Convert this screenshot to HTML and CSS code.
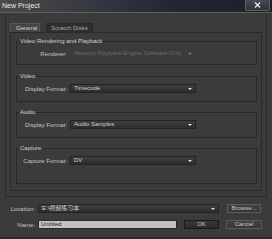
FILE: index.html
```html
<!DOCTYPE html>
<html>
<head>
<meta charset="utf-8">
<link rel="stylesheet" href="styles.css">
</head>
<body>
<div class="window">
  <div class="titlebar">
    <span class="title">New Project</span>
    <span class="close"><svg width="7" height="6" viewBox="0 0 7 6"><path d="M1 0.5 L6 5.5 M6 0.5 L1 5.5" stroke="#e6e6e6" stroke-width="1.4"/></svg></span>
  </div>
  <div class="frame">
    <div class="tabs">
      <span class="tab active">General</span>
      <span class="tab">Scratch Disks</span>
    </div>
    <div class="panel">
      <fieldset class="group g1">
        <legend>Video Rendering and Playback</legend>
        <div class="row"><span class="label">Renderer:</span><span class="select disabled"><span class="val">Mercury Playback Engine Software Only</span><span class="arrow"></span></span></div>
      </fieldset>
      <fieldset class="group g2">
        <legend>Video</legend>
        <div class="row"><span class="label">Display Format:</span><span class="select"><span class="val">Timecode</span><span class="arrow"></span></span></div>
      </fieldset>
      <fieldset class="group g3">
        <legend>Audio</legend>
        <div class="row"><span class="label">Display Format:</span><span class="select"><span class="val">Audio Samples</span><span class="arrow"></span></span></div>
      </fieldset>
      <fieldset class="group g4">
        <legend>Capture</legend>
        <div class="row"><span class="label">Capture Format:</span><span class="select"><span class="val">DV</span><span class="arrow"></span></span></div>
      </fieldset>
    </div>
  </div>
  <div class="bottom">
    <div class="brow">
      <span class="blabel">Location:</span>
      <span class="select loc"><span class="val">E:\视频练习本</span><span class="arrow"></span></span>
      <span class="btn browse">Browse...</span>
    </div>
    <div class="brow">
      <span class="blabel">Name:</span>
      <span class="input">Untitled</span>
      <span class="btn ok">OK</span>
      <span class="btn cancel">Cancel</span>
    </div>
  </div>
</div>
</body>
</html>
```

FILE: styles.css
```css
html, body {
  margin: 0;
  padding: 0;
  background: #3b3b3b;
}
body {
  width: 272px;
  height: 239px;
  overflow: hidden;
  font-family: "Liberation Sans", "Noto Sans CJK SC", sans-serif;
  font-size: 6px;
  color: #c4c4c4;
}
.window {
  width: 272px;
  height: 239px;
  box-sizing: border-box;
  display: flex;
  flex-direction: column;
  background: #3b3b3b;
  border-bottom: 2px solid #2a2a2a;
}
.titlebar {
  height: 12px;
  border-bottom: 1px solid #5e5e5e;
  display: flex;
  justify-content: space-between;
  align-items: flex-start;
  background: linear-gradient(90deg, #4a4a4a 0%, #353840 35%, #22262e 65%, #1c2029 100%);
}
.title {
  font-size: 7px;
  line-height: 11px;
  padding-left: 2px;
  color: #e8e8e8;
}
.close {
  width: 25px;
  height: 11px;
  margin-right: 2px;
  box-sizing: border-box;
  border: 1px solid #5a5e66;
  border-top: none;
  border-radius: 0 0 2px 2px;
  background: linear-gradient(#474b53, #2e323a);
  display: flex;
  align-items: center;
  justify-content: center;
}
.frame {
  margin: 0 5px 0 5px;
  border: 1px solid #2c2c2c;
  border-top: none;
  padding: 10px 4px 5px 4px;
}
.tabs {
  display: flex;
  gap: 6px;
  height: 9px;
}
.tab {
  box-sizing: border-box;
  height: 9px;
  line-height: 8px;
  padding: 0 4px;
  border: 1px solid #2a2a2a;
  border-bottom: none;
  background: #2f2f2f;
  color: #a8a8a8;
}
.tab.active {
  width: 30px;
  padding-left: 5px;
  background: #444444;
  border-color: #555555;
  color: #d4d4d4;
}
.panel {
  border: 1px solid #2a2a2a;
  padding: 4px 4px 6px 5px;
  display: flex;
  flex-direction: column;
  gap: 6px;
}
.group {
  margin: 0;
  min-width: 0;
  border: 1px solid #282828;
  padding: 4px 0 8px 0;
}
.group legend {
  margin-left: 2px;
  padding: 0 1px;
  line-height: 8px;
  color: #d0d0d0;
}
.g1 { padding-bottom: 6px; }
.g2 { margin-top: 1px; }
.g4 { padding-bottom: 18px; }
.row {
  display: flex;
  align-items: center;
  height: 9px;
}
.label {
  width: 50px;
  text-align: right;
  margin-right: 3px;
}
.select {
  box-sizing: border-box;
  width: 126px;
  height: 9px;
  display: flex;
  align-items: center;
  justify-content: space-between;
  padding: 0 3px 0 3px;
  border: 1px solid #232323;
  background: linear-gradient(#3e3e3e, #2d2d2d);
  color: #cfcfcf;
  line-height: 7px;
  white-space: nowrap;
}
.select.disabled {
  border-color: transparent;
  background: transparent;
  color: #6c6c6c;
}
.arrow {
  width: 0;
  height: 0;
  border-left: 2px solid transparent;
  border-right: 2px solid transparent;
  border-top: 2px solid #e4e4e4;
}
.select.disabled .arrow {
  border-top-color: #7a7a7a;
}
.bottom {
  padding-top: 7px;
  display: flex;
  flex-direction: column;
  gap: 7px;
}
.brow {
  display: flex;
  align-items: center;
  height: 9px;
}
.blabel {
  width: 35px;
  text-align: right;
  margin-right: 3px;
}
.select.loc {
  width: 181px;
  margin-right: 8px;
}
.btn {
  box-sizing: border-box;
  height: 9px;
  line-height: 7px;
  text-align: center;
  border: 1px solid #5c5c5c;
  background: linear-gradient(#424242, #363636);
  color: #c8c8c8;
}
.browse { width: 34px; }
.input {
  box-sizing: border-box;
  width: 139px;
  height: 9px;
  line-height: 7px;
  padding-left: 2px;
  margin-right: 7px;
  border: 1px solid #2a2a2a;
  background: #c2c2c2;
  color: #1e1e1e;
}
.ok {
  width: 35px;
  margin-right: 7px;
  border-color: #1a1a1a;
  background: linear-gradient(#383838, #2a2a2a);
}
.cancel { width: 36px; }
```
